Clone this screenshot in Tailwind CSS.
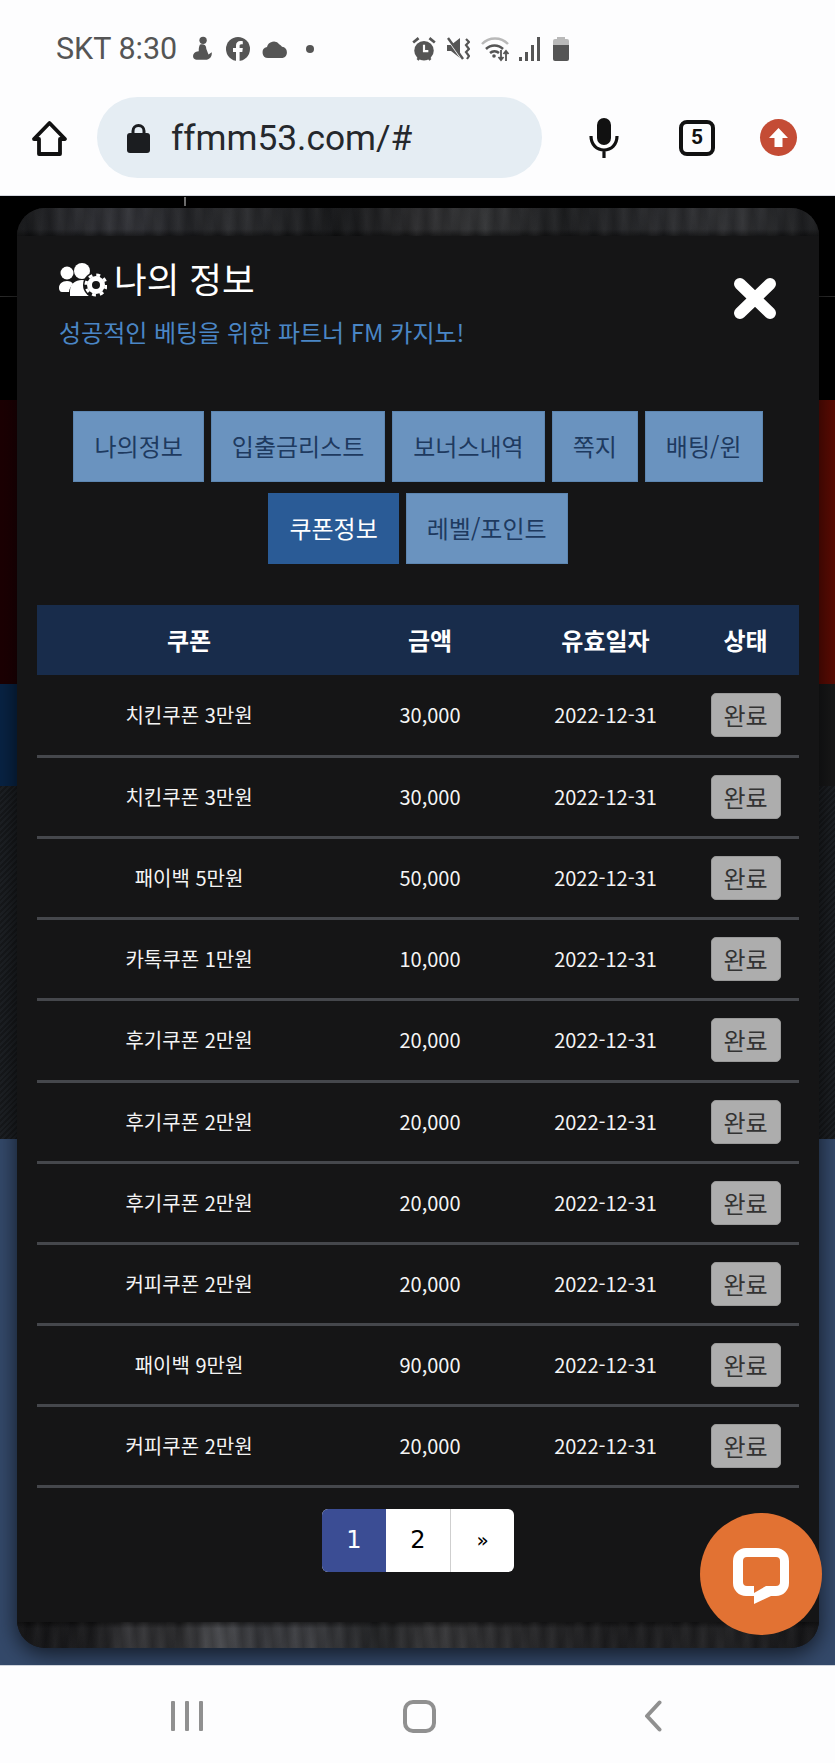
<!DOCTYPE html>
<html lang="ko">
<head>
    <meta charset="UTF-8">
    <meta name="viewport" content="width=device-width, initial-scale=1.0">
    <title>나의 정보</title>
    <script src="https://cdn.jsdelivr.net/npm/@tailwindcss/browser@4"></script>
</head>
<body class="w-[835px] h-[1763px] overflow-hidden flex flex-col bg-[#fdfdfe] font-['Noto_Sans_CJK_KR','Noto_Sans',sans-serif]">

    <!-- Browser chrome -->
    <header class="h-[196px] shrink-0 bg-[#fdfdfe] border-b border-[#d5d8e0]">
        <div class="h-[32px] mt-[33px] pl-[56px] flex items-center text-[#555555]">
            <span class="w-[121px] text-[30.5px] leading-none font-['Roboto',sans-serif] whitespace-nowrap">SKT 8:30</span>
            <svg class="ml-[14px] w-[22px] h-[26px]" viewBox="0 0 20 24" fill="#555"><circle cx="11" cy="4" r="3.400"/><path d="M8 8c3-1 6 0 6 4l2 5 3-2c.5 4-2 7-6 7H6c-3 0-5-2-4-5 1-2 3-3 5-3 0-2 0-4 1-6z"/></svg>
            <svg class="ml-[13px] w-[24px] h-[24px]" viewBox="0 0 24 24"><circle cx="12" cy="12" r="12" fill="#555"/><path fill="#fdfdfe" d="M10 24v-9H7v-4h3V8.500C10 5.500 11.800 4 14.400 4c1.200 0 2.400.2 2.400.2v3h-1.400c-1.400 0-1.800.8-1.800 1.700V11h3.200l-.5 4H13.600v9z"/></svg>
            <svg class="ml-[12px] w-[26px] h-[18px]" viewBox="0 0 26 18" fill="#555"><path d="M6 18a5.500 5.500 0 0 1-1-10.900A7 7 0 0 1 17.500 4.500 6.800 6.800 0 0 1 20 6.800 5.700 5.700 0 0 1 20.500 18z"/></svg>
            <span class="ml-[18px] w-[8px] h-[8px] rounded-full bg-[#555555]"></span>
            <svg class="ml-[98px] w-[24px] h-[26px]" viewBox="0 0 22 24"><circle cx="11" cy="13.500" r="9" fill="#555"/><path d="M1 6l5-4M21 6l-5-4M5 22l2-2M17 22l-2-2" stroke="#555" stroke-width="2.500"/><path d="M11 8v6h4" fill="none" stroke="#fdfdfe" stroke-width="2"/></svg>
            <svg class="ml-[11px] w-[23px] h-[24px]" viewBox="0 0 23 24" fill="#555"><path d="M0 8h4l9-7v20l-9-7H0z"/><path d="M1 2l14 20" stroke="#fdfdfe" stroke-width="2.500"/><path d="M1 1l15 21" stroke="#555" stroke-width="2.400"/><path d="M19 2l3 3-3 3 3 4-3 3 3 4-2 3" fill="none" stroke="#555" stroke-width="2.200"/></svg>
            <svg class="ml-[11px] w-[29px] h-[26px]" viewBox="0 0 29 26" fill="none"><path d="M1 8a18 18 0 0 1 26 0" stroke="#b9b9b9" stroke-width="2.500"/><path d="M5 13a12 12 0 0 1 17 0M9 17a7 7 0 0 1 9 0" stroke="#555" stroke-width="2.500"/><circle cx="13" cy="20" r="1.800" fill="#555"/><path d="M20 14v10m-2.500-3l2.500 3 2.500-3M25 25V15m-2.500 3l2.500-3 2.500 3" stroke="#555" stroke-width="1.800"/></svg>
            <div class="ml-[9px] w-[22px] h-[24px] flex items-end gap-[3px]">
                <span class="w-[3px] h-[4px] bg-[#555555]"></span>
                <span class="w-[3px] h-[9px] bg-[#555555]"></span>
                <span class="w-[3px] h-[16px] bg-[#555555]"></span>
                <span class="w-[3px] h-[24px] bg-[#555555]"></span>
            </div>
            <div class="ml-[12px] w-[16px] h-[24px] flex flex-col items-center">
                <span class="w-[8px] h-[2px] bg-[#b9b9b9]"></span>
                <span class="w-[16px] h-[6px] rounded-t-[2px] bg-[#b9b9b9]"></span>
                <span class="w-[16px] h-[16px] rounded-b-[2px] bg-[#555555]"></span>
            </div>
        </div>
        <div class="h-[81px] mt-[32px] pl-[31px] flex items-center">
            <svg class="w-[37px] h-[36px]" viewBox="0 0 37 36" fill="none" stroke="#111" stroke-width="3.800" stroke-linejoin="round"><path d="M18.500 3L34 19h-5v15H8V19H3z"/></svg>
            <div class="ml-[29px] w-[445px] h-[81px] rounded-full bg-[#e5edf3] flex items-center pl-[30px]">
                <svg class="w-[23px] h-[30px]" viewBox="0 0 23 30"><path d="M6 12V8a5.500 5.500 0 0 1 11 0v4" fill="none" stroke="#1b1d20" stroke-width="3"/><rect y="10" width="23" height="20" rx="3" fill="#1b1d20"/></svg>
                <span class="ml-[21px] pt-[2px] text-[35.3px] leading-none text-[#25282c] font-['Roboto',sans-serif]">ffmm53.com/#</span>
            </div>
            <svg class="ml-[47px] w-[30px] h-[40px]" viewBox="0 0 30 40" fill="none"><rect x="8" width="14" height="27" rx="7" fill="#111"/><path d="M2 18c0 9 6 14 13 14s13-5 13-14M15 32v8" stroke="#111" stroke-width="3.200"/></svg>
            <div class="ml-[60px] w-[36px] h-[36px] rounded-[8px] border-[4px] border-[#111111] flex items-center justify-center text-[21px] font-bold leading-none text-[#111111] font-['Roboto',sans-serif]">5</div>
            <div class="ml-[45px] w-[37px] h-[37px] rounded-full bg-[#c44c35] flex items-center justify-center">
                <svg class="w-[21px] h-[21px]" viewBox="0 0 21 21" fill="#fff"><path d="M10.500 1L20 11h-5.500v9h-8v-9H1z"/></svg>
            </div>
        </div>
    </header>

    <!-- Page behind the modal -->
    <main class="relative h-[1469px] shrink-0 flex flex-col overflow-hidden">
        <div class="h-[204px] bg-black">
            <div class="h-[101px] border-b border-[#2b2b2b]"></div>
        </div>
        <div class="h-[284px] bg-[linear-gradient(90deg,#1c0103,#5a0b03)]"></div>
        <div class="h-[102px] bg-[linear-gradient(90deg,#082344_0%,#082344_30%,#171717_100%)]"></div>
        <div class="h-[353px] bg-[repeating-linear-gradient(135deg,#16181b_0px,#16181b_2px,#1d2024_2px,#1d2024_4px)]"></div>
        <div class="h-[526px] bg-[#34496a]"></div>

        <span class="absolute left-[184px] top-[1px] w-[2px] h-[9px] bg-[#777777]"></span>

        <!-- Modal -->
        <section class="absolute left-[17px] top-[12px] w-[802px] h-[1440px] rounded-[28px] overflow-hidden flex flex-col bg-[#151516] shadow-[0_6px_22px_rgba(0,0,0,0.65)]">
            <div class="h-[28px] shrink-0 bg-[repeating-linear-gradient(96deg,rgba(0,0,0,0.16)_0px,transparent_9px,rgba(0,0,0,0.16)_17px),repeating-linear-gradient(78deg,rgba(255,255,255,0.035)_0px,transparent_12px,rgba(255,255,255,0.035)_23px),linear-gradient(180deg,transparent_75%,rgba(0,0,0,0.5)),linear-gradient(90deg,#17181a_0%,#2a2b2f_7%,#323338_14%,#232427_22%,#2c2d30_27%,#18191b_40%,#2c2c2e_50%,#333436_58%,#1e1f21_68%,#2a2b2e_80%,#303134_90%,#1b1c1e_100%)]"></div>
            <div class="flex-1 px-[20px] bg-[#151516]">
                <div class="relative pt-[24px] pl-[22px]">
                    <h1 class="flex items-center h-[40px] text-[35.5px] leading-[40px] text-white font-normal">
                        <svg class="w-[48px] h-[34px] shrink-0" viewBox="0 0 48 34">
                            <circle cx="8" cy="10" r="6.500" fill="#fff"/>
                            <circle cx="23" cy="8" r="8" fill="#fff"/>
                            <path d="M0 25c0-4 3-7 8-7 3 0 5 1 6 3-2 2-4 5-4 8H3c-2 0-3-2-3-4z" fill="#fff"/>
                            <path d="M11 33v-5c0-7 5-11 12-11s12 4 12 11v5z" fill="#fff"/>
                            <circle cx="37" cy="22" r="13" fill="#151516"/>
                            <circle cx="37" cy="22" r="6.500" fill="none" stroke="#fff" stroke-width="5"/>
                            <circle cx="37" cy="22" r="10" fill="none" stroke="#fff" stroke-width="3" stroke-dasharray="3.900 3.950"/>
                        </svg>
                        <span class="ml-[7px] mb-[4px]">나의 정보</span>
                    </h1>
                    <p class="mt-[16px] text-[24px] leading-[32px] text-[#4a86c5]">성공적인 베팅을 위한 파트너 FM 카지노!</p>
                    <button class="absolute right-[22px] top-[41px] w-[44px] h-[44px]">
                        <svg class="w-[44px] h-[44px]" viewBox="0 0 44 44" stroke="#fff" stroke-width="12" stroke-linecap="round"><path d="M7 7l30 29M37 7L7 36"/></svg>
                    </button>
                </div>

                <nav class="mt-[63px] flex flex-wrap justify-center gap-x-[7px] gap-y-[11px] text-[24px] leading-[68px] text-[#1e3a5f]">
                    <a class="px-[20px] h-[71px] border border-[#5d86b1] bg-[#6a93bf]">나의정보</a>
                    <a class="px-[20px] h-[71px] border border-[#5d86b1] bg-[#6a93bf]">입출금리스트</a>
                    <a class="px-[20px] h-[71px] border border-[#5d86b1] bg-[#6a93bf]">보너스내역</a>
                    <a class="px-[20px] h-[71px] border border-[#5d86b1] bg-[#6a93bf]">쪽지</a>
                    <a class="px-[20px] h-[71px] border border-[#5d86b1] bg-[#6a93bf]">배팅/윈</a>
                    <a class="px-[20px] h-[71px] border border-[#2a5b96] bg-[#2a5b96] text-white">쿠폰정보</a>
                    <a class="px-[20px] h-[71px] border border-[#5d86b1] bg-[#6a93bf]">레벨/포인트</a>
                </nav>

                <table class="mt-[41px] w-[762px] table-fixed border-collapse text-center text-[20px] text-[#f4f4f4]">
                    <colgroup>
                        <col class="w-[304px]">
                        <col class="w-[178px]">
                        <col class="w-[173px]">
                        <col class="w-[107px]">
                    </colgroup>
                    <thead class="bg-[#182c4b] text-[24px] text-white">
                        <tr class="h-[70px]">
                            <th class="font-bold">쿠폰</th>
                            <th class="font-bold">금액</th>
                            <th class="font-bold">유효일자</th>
                            <th class="font-bold">상태</th>
                        </tr>
                    </thead>
                    <tbody id="rows"></tbody>
                </table>

                <div class="mt-[21px] flex justify-center">
                    <div class="flex h-[63px] rounded-[6px] overflow-hidden bg-white text-black font-['DejaVu_Sans',sans-serif] text-[24px]">
                        <a class="w-[64px] flex items-center justify-center bg-[#3b4d94] text-white">1</a>
                        <a class="w-[65px] flex items-center justify-center border-r border-[#cfcfcf]">2</a>
                        <a class="w-[63px] flex items-center justify-center text-[20px]">»</a>
                    </div>
                </div>
            </div>
            <div class="h-[26px] shrink-0 bg-[repeating-linear-gradient(84deg,rgba(0,0,0,0.18)_0px,transparent_8px,rgba(0,0,0,0.18)_15px),repeating-linear-gradient(103deg,rgba(255,255,255,0.035)_0px,transparent_11px,rgba(255,255,255,0.035)_21px),linear-gradient(0deg,transparent_75%,rgba(0,0,0,0.5)),linear-gradient(90deg,#151517_0%,#1c1c1e_10%,#38383b_14%,#2a2a2c_20%,#4c4d51_25%,#36373b_30%,#3f4044_36%,#232426_45%,#38383a_52%,#2a2a2c_62%,#1d1d1f_75%,#222224_88%,#151517_100%)]"></div>
        </section>

        <!-- Chat button -->
        <button class="absolute left-[700px] top-[1317px] w-[122px] h-[122px] rounded-full bg-[#e27233]">
            <svg class="absolute left-[33px] top-[35px] w-[56px] h-[56px]" viewBox="0 0 56 56" fill="#fff" fill-rule="evenodd"><path d="M13 0H43a13 13 0 0 1 13 13V35a13 13 0 0 1-13 13H38L21 56V48H13a13 13 0 0 1-13-13V13A13 13 0 0 1 13 0ZM14 9a4 4 0 0 0-4 4V34a4 4 0 0 0 4 4H21V45L33 38H43a4 4 0 0 0 4-4V13a4 4 0 0 0-4-4Z"/></svg>
        </button>
    </main>

    <!-- Android nav bar -->
    <footer class="flex-1 pt-[3px] border-t border-[#cfd4dc] bg-[#fdfdfe] flex items-center">
        <div class="ml-[171px] flex gap-[10px]">
            <span class="w-[4px] h-[30px] rounded-[1px] bg-[#909090]"></span>
            <span class="w-[4px] h-[30px] rounded-[1px] bg-[#909090]"></span>
            <span class="w-[4px] h-[30px] rounded-[1px] bg-[#909090]"></span>
        </div>
        <span class="ml-[200px] w-[33px] h-[33px] rounded-[10px] border-[4px] border-[#909090]"></span>
        <svg class="ml-[208px] w-[18px] h-[32px]" viewBox="0 0 18 32" fill="none" stroke="#909090" stroke-width="4" stroke-linecap="round" stroke-linejoin="round"><path d="M15.500 2.500L3 16l12.500 13.500"/></svg>
    </footer>

    <script>
        // coupon rows
        const coupons = [
            ["치킨쿠폰 3만원", "30,000"],
            ["치킨쿠폰 3만원", "30,000"],
            ["패이백 5만원", "50,000"],
            ["카톡쿠폰 1만원", "10,000"],
            ["후기쿠폰 2만원", "20,000"],
            ["후기쿠폰 2만원", "20,000"],
            ["후기쿠폰 2만원", "20,000"],
            ["커피쿠폰 2만원", "20,000"],
            ["패이백 9만원", "90,000"],
            ["커피쿠폰 2만원", "20,000"],
        ];
        document.getElementById("rows").innerHTML = coupons.map(([name, amount], i) => `
            <tr class="${i === 4 ? "h-[82px]" : "h-[81px]"} border-b-[3px] border-[#45474c]">
                <td>${name}</td>
                <td>${amount}</td>
                <td>2022-12-31</td>
                <td><span class="inline-block align-middle w-[70px] h-[44px] rounded-[5px] border border-[#999999] bg-[#adadad] text-[24px] leading-[41px] text-[#333333]">완료</span></td>
            </tr>`).join("");
    </script>
</body>
</html>
